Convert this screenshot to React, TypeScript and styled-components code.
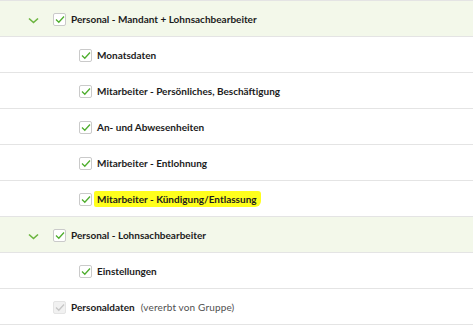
import React from "react";
import styled, { createGlobalStyle } from "styled-components";

const Global = createGlobalStyle`
  html, body { margin: 0; padding: 0; background: #fff; }
  body { font-family: "Lato", "Open Sans", sans-serif; }
`;

const List = styled.div`
  display: flex;
  flex-direction: column;
  width: 473px;
  border-bottom: 1px solid #e4e4e4;
`;

const Row = styled.div<{ $group?: boolean; $level: number }>`
  display: flex;
  align-items: center;
  height: 35px;
  border-top: 1px solid #e4e4e4;
  background: ${(p) => (p.$group ? "#f3f8ea" : "#ffffff")};
  padding-left: ${(p) => 28 + p.$level * 26}px;
`;

const ToggleSlot = styled.div`
  width: 25px;
  display: flex;
  align-items: center;
  padding-top: 4px;
`;

const Box = styled.div<{ $disabled?: boolean }>`
  width: 11px;
  height: 11px;
  border: 1px solid ${(p) => (p.$disabled ? "#e4e4e4" : "#cacaca")};
  border-radius: 2px;
  background: ${(p) => (p.$disabled ? "#f1f1f1" : "#fff")};
  display: flex;
  align-items: center;
  justify-content: center;
  margin-right: 5px;
  margin-top: 1px;
`;

const Label = styled.span`
  font-size: 10px;
  font-weight: 700;
  color: #1c1c1c;
  white-space: nowrap;
`;

const Note = styled.span`
  font-size: 10px;
  font-weight: 400;
  color: #505050;
  margin-left: 6px;
  letter-spacing: 0.15px;
  white-space: nowrap;
`;

const Marker = styled.span`
  display: inline-block;
  background: #ffff1c;
  padding: 2px 4px 2px 3px;
  margin-left: -3px;
  border-radius: 2px 3px 6px 2px;
`;

const Chevron = () => (
  <svg width="11" height="7" viewBox="0 0 11 7">
    <polyline points="1,1.5 5.5,5.5 10,1.5" fill="none" stroke="#6ab43e" strokeWidth="1.6" />
  </svg>
);

const Check = ({ disabled }: { disabled?: boolean }) => (
  <svg width="10" height="9" viewBox="0 0 10 9">
    <polyline
      points="1,4.5 3.8,7.2 9,1.5"
      fill="none"
      stroke={disabled ? "#c6c6c6" : "#4fae2e"}
      strokeWidth="1.3"
    />
  </svg>
);

type Item = {
  label: string;
  level: number;
  group?: boolean;
  disabled?: boolean;
  note?: string;
  marked?: boolean;
};

const items: Item[] = [
  { label: "Personal - Mandant + Lohnsachbearbeiter", level: 0, group: true },
  { label: "Monatsdaten", level: 1 },
  { label: "Mitarbeiter - Persönliches, Beschäftigung", level: 1 },
  { label: "An- und Abwesenheiten", level: 1 },
  { label: "Mitarbeiter - Entlohnung", level: 1 },
  { label: "Mitarbeiter - Kündigung/Entlassung", level: 1, marked: true },
  { label: "Personal - Lohnsachbearbeiter", level: 0, group: true },
  { label: "Einstellungen", level: 1 },
  { label: "Personaldaten", level: 0, disabled: true, note: "(vererbt von Gruppe)" },
];

export default function App() {
  return (
    <>
      <Global />
      <List>
        {items.map((it, i) => (
          <Row key={i} $group={it.group} $level={it.level}>
            <ToggleSlot>{it.group ? <Chevron /> : null}</ToggleSlot>
            <Box $disabled={it.disabled}>
              <Check disabled={it.disabled} />
            </Box>
            <Label>{it.marked ? <Marker>{it.label}</Marker> : it.label}</Label>
            {it.note ? <Note>{it.note}</Note> : null}
          </Row>
        ))}
      </List>
    </>
  );
}
